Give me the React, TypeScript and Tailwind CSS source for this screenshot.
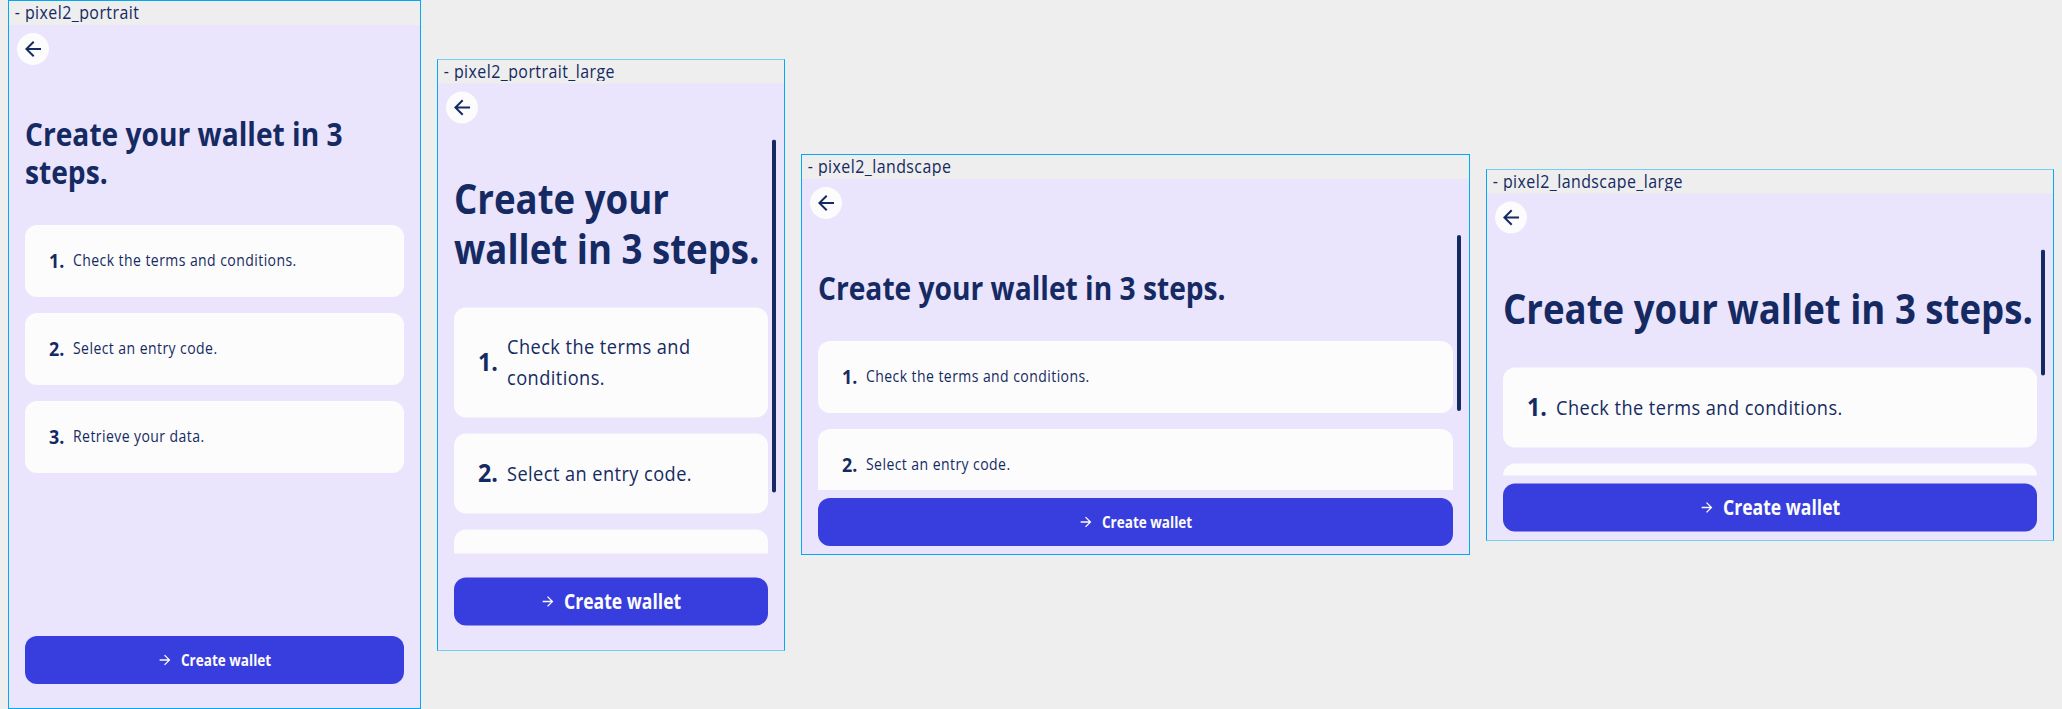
type Size = "normal" | "large";

interface Device {
  name: string;
  size: Size;
  portrait: boolean;
  /** Outer frame dimensions and border colours. */
  frame: string;
  /** Screens at the large text scale sit on a half pixel. */
  shift: string;
  /** Height of the scroll thumb; absent when everything fits. */
  thumb?: string;
}

const devices: Device[] = [
  {
    name: "pixel2_portrait",
    size: "normal",
    portrait: true,
    frame: "h-[709px] w-[413px] border-[#03a9f4]",
    shift: "",
  },
  {
    name: "pixel2_portrait_large",
    size: "large",
    portrait: true,
    frame: "mt-px h-[592px] w-[348px] border-x-[#03a9f4] border-y-[#76cdf2]",
    shift: "translate-y-[-0.5px]",
    thumb: "h-[352.5px]",
  },
  {
    name: "pixel2_landscape",
    size: "normal",
    portrait: false,
    frame: "h-[401px] w-[669px] border-[#03a9f4]",
    shift: "",
    thumb: "h-[176px]",
  },
  {
    name: "pixel2_landscape_large",
    size: "large",
    portrait: false,
    frame: "mt-px h-[372px] w-[568px] border-x-[#03a9f4] border-y-[#76cdf2]",
    shift: "translate-y-[-0.5px]",
    thumb: "h-[125.5px]",
  },
];

const steps = ["Check the terms and conditions.", "Select an entry code.", "Retrieve your data."];

const headingStyle: Record<Size, string> = {
  normal: "pt-[34px] pb-[34px] text-[32px] leading-[38px]",
  large: "pt-[33px] pb-[35px] text-[41.6px] leading-[50px]",
};

const cardStyle: Record<Size, string> = { normal: "min-h-[72px]", large: "min-h-[80px]" };

const numberStyle: Record<Size, string> = {
  normal: "w-4 text-[19px] leading-6 -translate-y-[0.5px]",
  large: "w-[21px] text-[24.7px] leading-8 -translate-y-px",
};

const bodyStyle: Record<Size, string> = {
  normal: "text-[16px] leading-6",
  large: "text-[20.8px] leading-[31px]",
};

const buttonStyle: Record<Size, string> = {
  normal: "text-[16px] translate-y-[-0.5px]",
  large: "text-[20.8px] translate-y-[0.5px]",
};

function BackIcon() {
  return (
    <svg viewBox="0 0 24 24" className="size-6 fill-[#152a62]" aria-hidden="true">
      <path d="M20 11H7.83l5.59-5.59L12 4l-8 8 8 8 1.41-1.41L7.83 13H20v-2z" />
    </svg>
  );
}

function ForwardIcon() {
  return (
    <svg viewBox="0 0 24 24" className="size-4 shrink-0 fill-[#fcfcfc]" aria-hidden="true">
      <path d="M12 4l-1.41 1.41L16.17 11H4v2h12.17l-5.58 5.59L12 20l8-8z" />
    </svg>
  );
}

function StepCard({ index, text, size }: { index: number; text: string; size: Size }) {
  return (
    <li className={`flex shrink-0 items-center gap-2 rounded-xl bg-[#fcfcfc] p-6 ${cardStyle[size]}`}>
      <span className={`shrink-0 origin-left scale-x-[0.94] font-bold ${numberStyle[size]}`}>{index}.</span>
      <span
        className={`origin-left -translate-y-px scale-x-[0.875] tracking-[0.5px] ${bodyStyle[size]}`}
      >
        {text}
      </span>
    </li>
  );
}

function Screen({ device }: { device: Device }) {
  const { size, portrait, shift, thumb } = device;
  return (
    <div className={`flex min-h-0 flex-1 flex-col bg-[#eae4fc] ${shift}`}>
      <header className="flex h-14 shrink-0 items-start p-2">
        <button className="flex size-8 items-center justify-center rounded-full bg-[#fcfcfc]" aria-label="Back">
          <BackIcon />
        </button>
      </header>
      <main className="relative min-h-0 flex-1 overflow-hidden px-4">
        <h1
          className={`w-[113.6%] origin-left scale-x-[0.88] font-bold ${headingStyle[size]}`}
        >
          Create your wallet in 3 steps.
        </h1>
        <ol className="flex flex-col gap-4">
          {steps.map((text, i) => (
            <StepCard key={text} index={i + 1} text={text} size={size} />
          ))}
        </ol>
        {thumb && <div className={`absolute top-0 right-2 w-1 rounded-full bg-[#152a62] ${thumb}`} />}
      </main>
      <footer className={portrait ? "px-4 py-6" : "px-4 py-2"}>
        <button className="flex h-12 w-full items-center justify-center gap-2 rounded-xl bg-[#383ede] text-[#fcfcfc]">
          <ForwardIcon />
          <span
            className={`-mr-[1em] origin-left scale-x-[0.845] font-bold ${buttonStyle[size]}`}
          >
            Create wallet
          </span>
        </button>
      </footer>
    </div>
  );
}

export default function App() {
  return (
    <div className="flex h-[709px] w-[2062px] items-center gap-4 overflow-hidden bg-[#eeeeee] px-2 font-['Open_Sans',sans-serif] text-[#152a62]">
      {devices.map((device) => (
        <section key={device.name} className={`flex shrink-0 flex-col border ${device.frame}`}>
          <div className="h-6 shrink-0 pl-1">
            <div className="h-[21px] w-[112%] origin-left scale-x-[0.885] overflow-hidden pl-0.5 text-[18px] leading-[23px] tracking-[0.5px] whitespace-nowrap">
              - {device.name}
            </div>
          </div>
          <Screen device={device} />
        </section>
      ))}
    </div>
  );
}
